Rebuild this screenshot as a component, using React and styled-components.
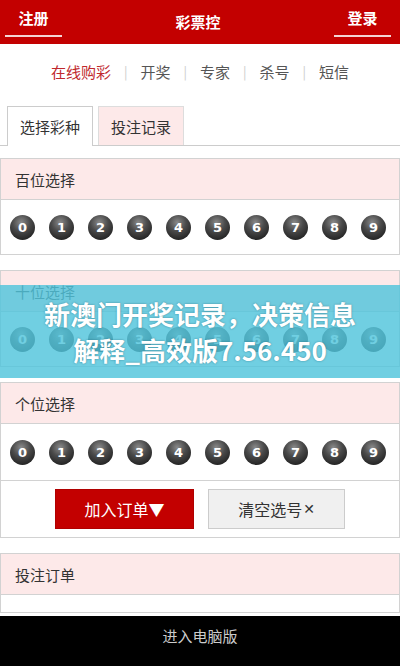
import React from 'react';
import styled, { createGlobalStyle } from 'styled-components';

const GlobalStyle = createGlobalStyle`
  body {
    margin: 0;
    background: #fff;
    font-family: "Noto Sans CJK SC", "Noto Sans", sans-serif;
  }
`;

const Page = styled.div`
  position: relative;
  width: 400px;
  height: 666px;
  overflow: hidden;
  background: #fff;
`;

const TopBar = styled.div`
  display: flex;
  align-items: flex-start;
  justify-content: space-between;
  height: 44px;
  padding: 0 9px 0 5px;
  background: #c30000;
  box-sizing: border-box;
`;

const TopLink = styled.div`
  width: 57px;
  height: 37px;
  box-sizing: border-box;
  padding-top: 8px;
  text-align: center;
  color: #fff;
  font-size: 15px;
  font-weight: 700;
  line-height: 20px;
  border-bottom: 2px solid #f4d4d4;
`;

const Title = styled.div`
  padding-top: 11px;
  color: #fff;
  font-size: 15px;
  font-weight: 700;
  line-height: 22px;
`;

const Nav = styled.div`
  display: flex;
  align-items: center;
  justify-content: center;
  gap: 13px;
  height: 52px;
  padding-top: 1px;
  font-size: 15px;
`;

const NavItem = styled.span`
  color: ${p => (p.active ? '#c0282d' : '#555')};
`;

const Sep = styled.span`
  color: #ccc;
  font-size: 13px;
`;

const Tabs = styled.div`
  display: flex;
  gap: 5px;
  margin-top: 9px;
  padding-left: 7px;
  border-bottom: 1px solid #ccc;
  height: 39px;
`;

const Tab = styled.div`
  width: 86px;
  height: 39px;
  box-sizing: border-box;
  display: flex;
  align-items: center;
  justify-content: center;
  font-size: 15px;
  color: #333;
  border: 1px solid ${p => (p.active ? '#ccc' : '#ddd')};
  border-bottom: none;
  background: ${p => (p.active ? '#fff' : '#fde9e9')};
  ${p => p.active && 'height: 40px; position: relative; z-index: 1;'}
`;

const Panel = styled.div`
  margin-top: ${p => p.top || 15}px;
  border: 1px solid #d2d2d2;
`;

const PanelHead = styled.div`
  height: 40px;
  padding-left: 14px;
  display: flex;
  align-items: center;
  background: #fde9e9;
  color: #333;
  font-size: 15px;
`;

const BallRow = styled.div`
  display: flex;
  align-items: center;
  gap: 14px;
  height: ${p => p.h || 54}px;
  padding-left: 9px;
  border-top: 1px solid #d2d2d2;
  background: #fff;
`;

const Ball = styled.span`
  width: 25px;
  height: 25px;
  border-radius: 50%;
  flex: none;
  display: flex;
  align-items: center;
  justify-content: center;
  background: radial-gradient(circle at 45% 30%, #8a8a8a 0%, #4a4a4a 40%, #1e1e1e 85%, #111 100%);
  color: #fff;
  font-family: "DejaVu Sans", sans-serif;
  font-weight: 700;
  font-size: 13px;
`;

const ButtonRow = styled.div`
  display: flex;
  justify-content: center;
  gap: 14px;
  height: 57px;
  padding-top: 8px;
  box-sizing: border-box;
  border-top: 1px solid #d2d2d2;
`;

const Button = styled.div`
  width: ${p => (p.primary ? 139 : 137)}px;
  height: 40px;
  box-sizing: border-box;
  display: flex;
  align-items: center;
  justify-content: center;
  font-size: 16px;
  color: ${p => (p.primary ? '#fff' : '#333')};
  background: ${p => (p.primary ? '#c30000' : '#f0f0f0')};
  border: 1px solid ${p => (p.primary ? '#b00000' : '#ccc')};
`;

const Cross = styled.span`
  font-family: "DejaVu Sans", sans-serif;
  font-weight: 700;
  font-size: 14px;
  margin-left: 1px;
`;

const OrderBody = styled.div`
  height: 17px;
  border-top: 1px solid #d2d2d2;
`;

const Footer = styled.div`
  position: absolute;
  left: 0;
  right: 0;
  bottom: 0;
  height: 50px;
  background: #000;
  color: #ccc;
  font-size: 15px;
  display: flex;
  align-items: center;
  justify-content: center;
  padding-bottom: 11px;
  box-sizing: border-box;
`;

const Banner = styled.div`
  position: absolute;
  left: 0;
  right: 0;
  top: 285px;
  height: 93px;
  background: rgba(80, 196, 220, 0.82);
  display: flex;
  flex-direction: column;
  align-items: center;
  justify-content: center;
  color: #fff;
  font-size: 26px;
  font-weight: 700;
  line-height: 36px;
  text-shadow: 0 0 2px rgba(0, 60, 80, 0.5);
`;

const digits = [0, 1, 2, 3, 4, 5, 6, 7, 8, 9];

const Balls = ({ h }) => (
  <BallRow h={h}>
    {digits.map(d => (
      <Ball key={d}>{d}</Ball>
    ))}
  </BallRow>
);

const App = () => {
  const nav = ['开奖', '专家', '杀号', '短信'];
  return (
    <Page>
      <GlobalStyle />
      <TopBar>
        <TopLink>注册</TopLink>
        <Title>彩票控</Title>
        <TopLink>登录</TopLink>
      </TopBar>
      <Nav>
        <NavItem active>在线购彩</NavItem>
        {nav.map(n => (
          <React.Fragment key={n}>
            <Sep>|</Sep>
            <NavItem>{n}</NavItem>
          </React.Fragment>
        ))}
      </Nav>
      <Tabs>
        <Tab active>选择彩种</Tab>
        <Tab>投注记录</Tab>
      </Tabs>
      <Panel top={12}>
        <PanelHead>百位选择</PanelHead>
        <Balls />
      </Panel>
      <Panel>
        <PanelHead>十位选择</PanelHead>
        <Balls />
      </Panel>
      <Panel>
        <PanelHead>个位选择</PanelHead>
        <Balls h={56} />
        <ButtonRow>
          <Button primary>加入订单▼</Button>
          <Button>
            清空选号<Cross>✕</Cross>
          </Button>
        </ButtonRow>
      </Panel>
      <Panel>
        <PanelHead>投注订单</PanelHead>
        <OrderBody />
      </Panel>
      <Banner>
        <div>新澳门开奖记录，决策信息</div>
        <div>解释_高效版7.56.450</div>
      </Banner>
      <Footer>进入电脑版</Footer>
    </Page>
  );
};

export default App;
